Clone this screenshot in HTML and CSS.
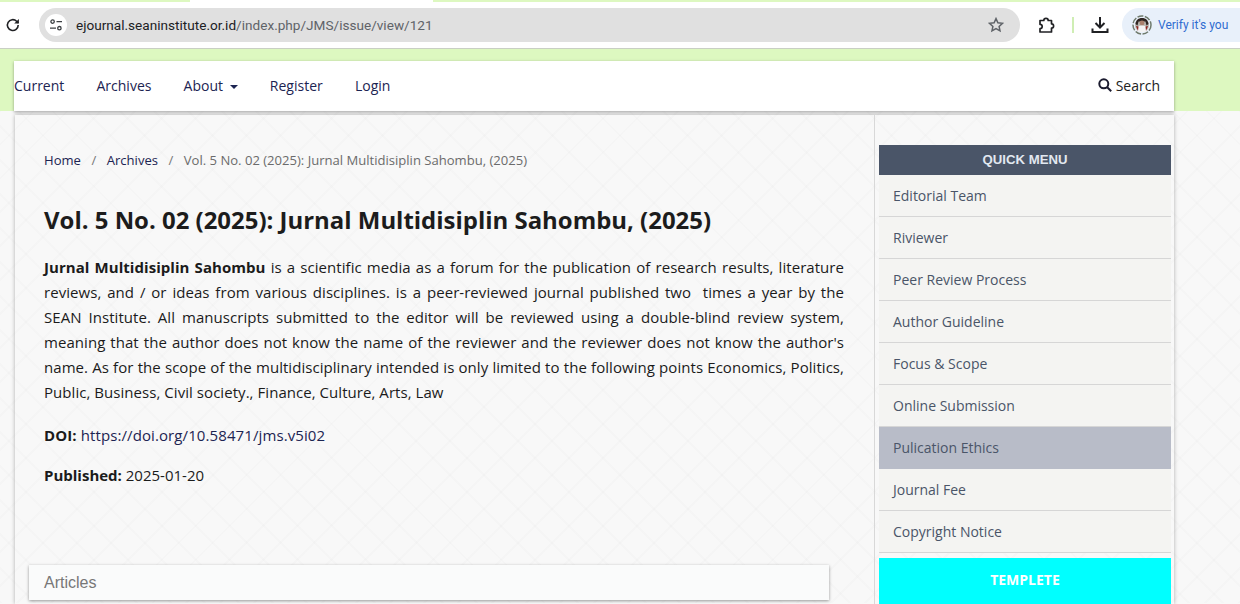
FILE: index.html
```html
<!DOCTYPE html>
<html lang="en">
<head>
<meta charset="utf-8">
<title>Vol. 5 No. 02 (2025): Jurnal Multidisiplin Sahombu, (2025)</title>
<link rel="stylesheet" href="styles.css">
</head>
<body>
<div class="tabstrip"><span class="tab"></span></div>
<div class="toolbar">
  <svg class="reload" width="16" height="16" viewBox="0 0 16 16"><path d="M13.2 8a5.4 5.4 0 1 1-1.6-3.8L13.4 6" fill="none" stroke="#202124" stroke-width="1.6"/><path d="M13.9 1.9v4.7H9.2z" fill="#202124"/></svg>
  <div class="omnibox">
    <span class="site-chip"><svg width="14" height="14" viewBox="0 0 14 14" fill="none" stroke="#3c4043" stroke-width="1.3"><circle cx="3.6" cy="3.6" r="1.7"/><path d="M7.5 3.6h5.5M1 10.2h6"/><circle cx="10.4" cy="10.2" r="1.7"/></svg></span>
    <span class="url"><span class="host">ejournal.seaninstitute.or.id</span>/index.php/JMS/issue/view/121</span>
    <svg class="star" width="16" height="16" viewBox="0 0 16 16"><path d="M8 1.6l1.9 4.2 4.6.5-3.4 3.1.9 4.5L8 11.6l-4 2.3.9-4.5L1.5 6.3l4.6-.5z" fill="none" stroke="#5f6368" stroke-width="1.5"/></svg>
  </div>
  <svg class="ext" width="18" height="18" viewBox="0 0 18 18"><path d="M2 4.5H5.8a2.2 2.2 0 0 1 4.4 0H13.5V7.800a2.100 2.100 0 0 1 0 4.200V16H2V12.700a2.200 2.200 0 0 0 0-4.400z" fill="none" stroke="#202124" stroke-width="1.7" stroke-linejoin="round"/></svg>
  <span class="sep"></span>
  <svg class="dl" width="18" height="18" viewBox="0 0 18 18"><path d="M9 1v10.500M4.500 7L9 11.500 13.500 7" fill="none" stroke="#202124" stroke-width="2"/><path d="M1.500 12.500v3.500h15v-3.500" fill="none" stroke="#202124" stroke-width="2"/></svg>
  <div class="verify">
    <svg width="20" height="20" viewBox="0 0 20 20"><circle cx="10" cy="10" r="9" fill="none" stroke="#6f7a6c" stroke-width="1.5" stroke-dasharray="6 1.5"/><circle cx="10" cy="10" r="7" fill="#b9b5ae"/><path d="M3.500 9c.5-4 3-6 6.500-6s6 2 6.500 6l-2 1.500-1-4H6.500l-1 4z" fill="#2e2421"/><circle cx="10" cy="8" r="2.400" fill="#a97f6c"/><path d="M5 15.500l1.500-4.500 3.500-.5 3.500.5 1.500 4.500-2.500 1.500h-5z" fill="#f4f4f4"/><path d="M4 11l2.500.5-.5 4.500zM16 11l-2.500.5.5 4.500z" fill="#8e2420"/></svg>
    <span>Verify it's you</span>
  </div>
</div>

<div class="page">
  <div class="band">
    <nav class="navbar">
      <ul class="nav-list">
        <li><a href="#">Current</a></li>
        <li><a href="#">Archives</a></li>
        <li><a href="#">About <span class="caret"></span></a></li>
        <li><a href="#">Register</a></li>
        <li><a href="#">Login</a></li>
      </ul>
      <a class="search" href="#"><svg width="14" height="14" viewBox="0 0 14 14" fill="none" stroke="#1b1b2f" stroke-width="2"><circle cx="5.800" cy="5.800" r="4.500"/><path d="M9 9l4.200 4.200"/></svg>Search</a>
    </nav>
  </div>

  <div class="wrap">
    <main class="content">
      <ol class="crumbs">
        <li><a href="#">Home</a></li>
        <li class="slash">/</li>
        <li><a href="#">Archives</a></li>
        <li class="slash">/</li>
        <li class="current">Vol. 5 No. 02 (2025): Jurnal Multidisiplin Sahombu, (2025)</li>
      </ol>
      <h1>Vol. 5 No. 02 (2025): Jurnal Multidisiplin Sahombu, (2025)</h1>
      <p class="desc"><strong>Jurnal Multidisiplin Sahombu</strong> is a scientific media as a forum for the publication of research results, literature reviews, and / or ideas from various disciplines. is a peer-reviewed journal published two&nbsp; times a year by the SEAN Institute. All manuscripts submitted to the editor will be reviewed using a double-blind review system, meaning that the author does not know the name of the reviewer and the reviewer does not know the author's name. As for the scope of the multidisciplinary intended is only limited to the following points Economics, Politics, Public, Business, Civil society., Finance, Culture, Arts, Law</p>
      <p class="meta doi"><strong>DOI:</strong> <a href="#">https://doi.org/10.58471/jms.v5i02</a></p>
      <p class="meta"><strong>Published:</strong> 2025-01-20</p>
      <div class="section-head"><h2>Articles</h2></div>
    </main>
    <aside class="sidebar">
      <h3 class="quick">QUICK MENU</h3>
      <ul class="menu">
        <li><a href="#">Editorial Team</a></li>
        <li><a href="#">Riviewer</a></li>
        <li><a href="#">Peer Review Process</a></li>
        <li><a href="#">Author Guideline</a></li>
        <li><a href="#">Focus &amp; Scope</a></li>
        <li><a href="#">Online Submission</a></li>
        <li class="active"><a href="#">Pulication Ethics</a></li>
        <li><a href="#">Journal Fee</a></li>
        <li><a href="#">Copyright Notice</a></li>
      </ul>
      <a class="template" href="#">TEMPLETE</a>
    </aside>
  </div>
</div>
</body>
</html>
```
FILE: styles.css
```css
* { box-sizing: border-box; }
html, body { margin: 0; padding: 0; height: 604px; overflow: hidden; }
body {
  font-family: "Open Sans", "Noto Sans", sans-serif;
  font-size: 15px;
  color: #1b1b1b;
  background-color: #f8f8f8;
}
a { color: inherit; text-decoration: none; }
ul, ol { list-style: none; margin: 0; padding: 0; }

.tabstrip { height: 2px; background: #ddf8c0; display: flex; }
.tab { width: 243px; height: 2px; margin-left: 190px; background: #fff; }

.toolbar {
  height: 46px;
  background: #fff;
  display: flex;
  align-items: center;
  padding: 0 0 0 5px;
}
.reload { flex: none; }
.omnibox {
  margin-left: 18px;
  width: 981px;
  height: 34px;
  border-radius: 17px;
  background: #e0e0e0;
  display: flex;
  align-items: center;
  padding: 0 16px 0 6px;
  flex: none;
}
.site-chip {
  width: 22px; height: 22px;
  border-radius: 50%;
  background: #fff;
  display: flex;
  align-items: center;
  justify-content: center;
  flex: none;
}
.url {
  margin-left: 9px;
  flex: 1;
  font-family: "Roboto", sans-serif;
  font-size: 13.6px;
  color: #5f6368;
}
.host { color: #202124; }
.ext { margin-left: 18px; flex: none; }
.sep { width: 2px; height: 16px; background: #cfeeb4; margin-left: 16px; flex: none; }
.dl { margin-left: 17px; flex: none; }
.verify {
  margin-left: 13px;
  flex: none;
  width: 119px;
  height: 34px;
  border-radius: 17px 0 0 17px;
  background: #e8f0fa;
  display: flex;
  align-items: center;
  gap: 6px;
  padding-left: 10px;
  color: #2f6cd0;
  font-family: "Roboto", sans-serif;
  font-size: 12px;
  white-space: nowrap;
}

.page {
  height: 555px;
  border-top: 1px solid #c9cfc4;
  background-color: #f8f8f8;
  background-image:
    repeating-linear-gradient(45deg, rgba(0,0,0,.013) 0 2px, transparent 2px 24px),
    repeating-linear-gradient(-45deg, rgba(0,0,0,.013) 0 2px, transparent 2px 24px);
}
.band { height: 62px; background: #ddf8c0; padding: 12px 66px 0 14px; }
.navbar {
  height: 50px;
  background: #fff;
  box-shadow: 0 1px 3px rgba(0,0,0,.35);
  display: flex;
  align-items: center;
  justify-content: space-between;
  padding: 0 14px 2px 0;
  color: #1c2452;
  font-size: 14px;
}
.nav-list { display: flex; gap: 32.2px; }
.caret {
  display: inline-block;
  width: 0; height: 0;
  border: 4px solid transparent;
  border-top-color: #1c2452;
  border-bottom-width: 0;
  margin-left: 3px;
  vertical-align: 2px;
}
.search { display: flex; align-items: center; gap: 4px; color: #222; }

.wrap {
  margin: 4px 66px 0 15px;
  width: 1159px;
  height: 489px;
  display: flex;
  box-shadow: 0 0 4px rgba(0,0,0,.3);
}
.content {
  width: 860px;
  padding: 36px 30px 0 29px;
  border-right: 1px solid #d8d8d8;
  flex: none;
}
.crumbs { display: flex; font-size: 13.07px; line-height: 18px; color: #1c2452; }
.slash { color: #777; margin: 0 10.5px; }
.current { color: #6b6b6b; }
h1 {
  margin: 35px 0 0;
  font-size: 23.95px;
  line-height: 32px;
  font-weight: 700;
  color: #1c1c1c;
}
.desc {
  margin: 19px 0 0;
  font-size: 15px;
  line-height: 25px;
  letter-spacing: .05px;
  text-align: justify;
}
.meta { margin: 18px 0 0; font-size: 15px; line-height: 22px; }
.doi { margin-top: 19px; letter-spacing: .1px; }
.doi a { color: #1c2452; }
.section-head {
  position: relative;
  margin: 79px 0 0 -15px;
  width: 800px;
  height: 35px;
  background: #fafbfb;
  box-shadow: 0 1px 3px rgba(0,0,0,.4);
}
.section-head::before {
  content: "";
  position: absolute;
  left: -14px;
  right: -45px;
  top: 15px;
  height: 1px;
  background: #dcdcdc;
  z-index: -1;
}
.section-head h2 {
  margin: 0;
  padding: 0 0 0 15px;
  font-family: "Liberation Sans", Arial, sans-serif;
  font-size: 16px;
  line-height: 35px;
  font-weight: 400;
  color: #777;
}
.sidebar { flex: 1; padding: 30px 3px 0 4px; overflow: hidden; }
.quick {
  margin: 0;
  height: 30px;
  background: #4a5568;
  color: #e2e8f0;
  text-align: center;
  font-family: "Liberation Sans", Arial, sans-serif;
  font-size: 13.2px;
  line-height: 29px;
  font-weight: 700;
}
.menu li {
  height: 42px;
  background: #f4f4f2;
  border-bottom: 1px solid #d6d6d6;
  color: #4a5568;
  font-size: 14px;
  line-height: 41px;
  padding-left: 14px;
}
.menu li.active { background: #b8bcc8; border-bottom-color: #b8bcc8; }
.template {
  display: block;
  margin-top: 5px;
  height: 46px;
  background: #0ff;
  color: #fff;
  font-weight: 700;
  font-size: 14px;
  text-align: center;
  line-height: 44px;
}
```
